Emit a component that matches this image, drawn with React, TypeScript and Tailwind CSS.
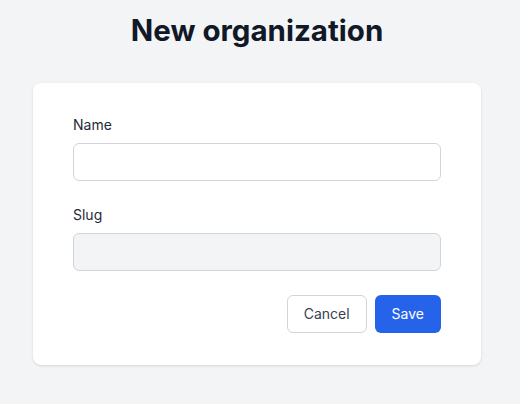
export default function App() {
  return (
    <div className="min-h-[404px] bg-[#f3f4f6] font-['Inter',sans-serif] pt-3">
      <div className="ml-[33px] w-[448px]">
        <h1 className="text-center text-[29.5px] leading-9 font-bold text-[#111827] mb-[35px]">New organization</h1>
        <form className="bg-white rounded-lg shadow-sm px-10 pt-8 pb-8 flex flex-col gap-6">
          <div>
            <label className="block text-sm leading-5 font-normal text-[#1f2937] mb-2">Name</label>
            <input
              type="text"
              className="block w-full h-[38px] rounded-md border border-[#d1d5db] bg-white px-3 text-sm outline-none"
            />
          </div>
          <div>
            <label className="block text-sm leading-5 font-normal text-[#1f2937] mb-2">Slug</label>
            <input
              type="text"
              disabled
              className="block w-full h-[38px] rounded-md border border-[#d1d5db] bg-[#f3f4f6] px-3 text-sm outline-none"
            />
          </div>
          <div className="flex justify-end gap-2">
            <button
              type="button"
              className="h-[38px] px-4 rounded-md border border-[#d1d5db] bg-white text-sm font-normal text-[#374151]"
            >
              Cancel
            </button>
            <button type="submit" className="h-[38px] px-[17px] rounded-md bg-[#2563eb] text-sm font-normal text-white">
              Save
            </button>
          </div>
        </form>
      </div>
    </div>
  );
}
